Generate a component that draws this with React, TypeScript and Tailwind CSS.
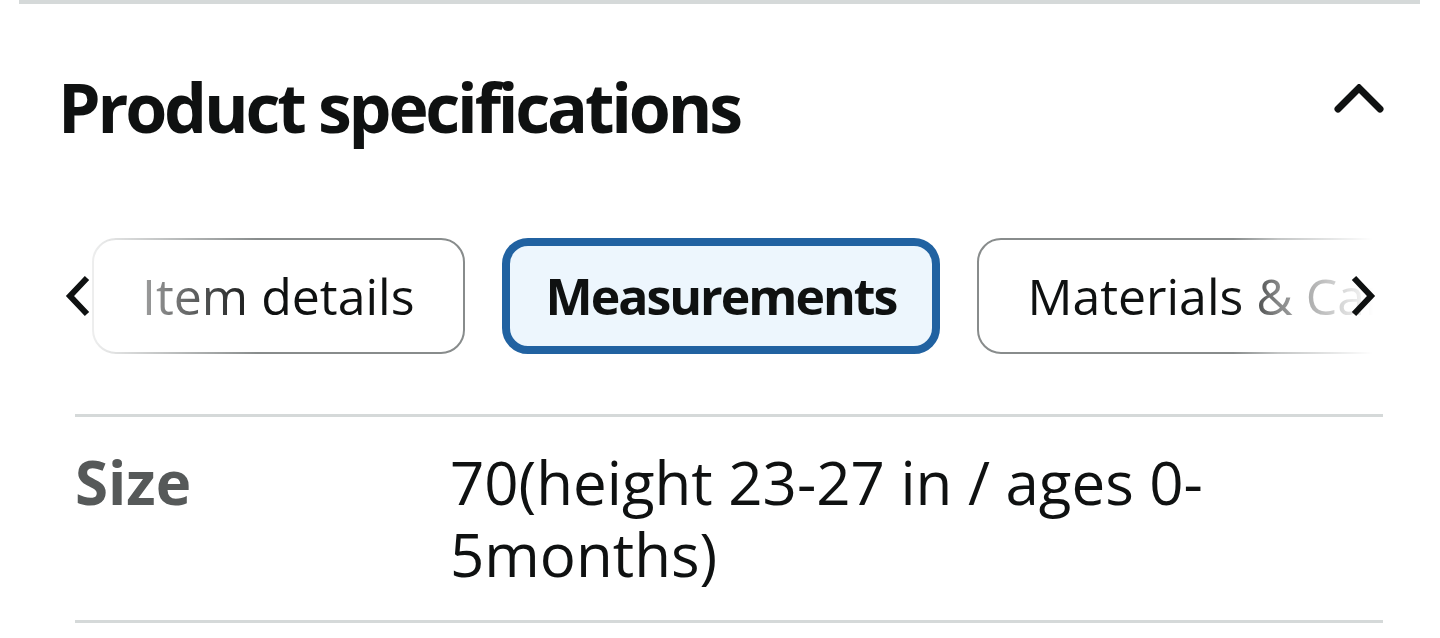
import React from "react";

const FONT = { fontFamily: '"Open Sans", "Noto Sans", sans-serif' };

function ChevronUp() {
  return (
    <svg width="56" height="40" viewBox="0 0 56 40" fill="none" className="-mt-[6px] shrink-0">
      <polyline
        points="7,25 28,4 49,25"
        stroke="#0f1111"
        strokeWidth="7"
        strokeLinecap="round"
        strokeLinejoin="miter"
      />
    </svg>
  );
}

function ArrowSide({ dir }: { dir: "left" | "right" }) {
  const pts = dir === "left" ? "23,4 6,22 23,40" : "7,4 24,22 7,40";
  return (
    <svg width="30" height="44" viewBox="0 0 30 44" fill="none">
      <polyline points={pts} stroke="#0f1111" strokeWidth="6" strokeLinejoin="miter" />
    </svg>
  );
}

const tabs = [
  { label: "Item details", active: false },
  { label: "Measurements", active: true },
  { label: "Materials & Care", active: false },
];

export default function App() {
  return (
    <div className="h-[638px] w-full overflow-hidden bg-white text-[#0f1111]" style={FONT}>
      <div className="ml-[19px] mr-[20px] h-[4px] bg-[#d5d9d9]" />

      <div className="mt-[60px] flex items-center justify-between pl-[58px] pr-[53px]">
        <h2 className="text-[68px] font-bold leading-[86px] tracking-[-3.2px]">
          Product specifications
        </h2>
        <ChevronUp />
      </div>

      <div className="relative ml-[58px] mr-[57px] mt-[88px]">
        <div className="flex gap-[37px] overflow-hidden pl-[34px] [mask-image:linear-gradient(to_right,rgba(0,0,0,0.15)_35px,black_200px,black_calc(100%_-_150px),rgba(0,0,0,0.5)_calc(100%_-_105px),transparent_calc(100%_-_10px))]">
          {tabs.map((t) =>
            t.active ? (
              <div
                key={t.label}
                className="flex h-[116px] shrink-0 items-center rounded-[26px] border-[8px] border-[#2162a1] bg-[#edf6fd] px-[36px] text-[50px] font-bold tracking-[-2px]"
              >
                {t.label}
              </div>
            ) : (
              <div
                key={t.label}
                className="flex h-[116px] shrink-0 items-center rounded-[24px] border-[2px] border-[#888c8c] bg-white px-[48px] text-[50px]"
              >
                {t.label}
              </div>
            )
          )}
        </div>
        <div className="absolute left-[6px] top-[36px]">
          <ArrowSide dir="left" />
        </div>
        <div className="absolute right-[6px] top-[36px]">
          <ArrowSide dir="right" />
        </div>
      </div>

      <div className="ml-[75px] mr-[57px] mt-[60px] border-y-[3px] border-[#d5d9d9] pb-[30px] pt-[29px]">
        <div className="flex text-[60px] leading-[72px]">
          <div className="w-[375px] shrink-0 font-bold text-[#565959]">Size</div>
          <div className="flex-1 pr-[20px]">
            70(height 23-27 in / ages 0-<wbr />5months)
          </div>
        </div>
      </div>
    </div>
  );
}
